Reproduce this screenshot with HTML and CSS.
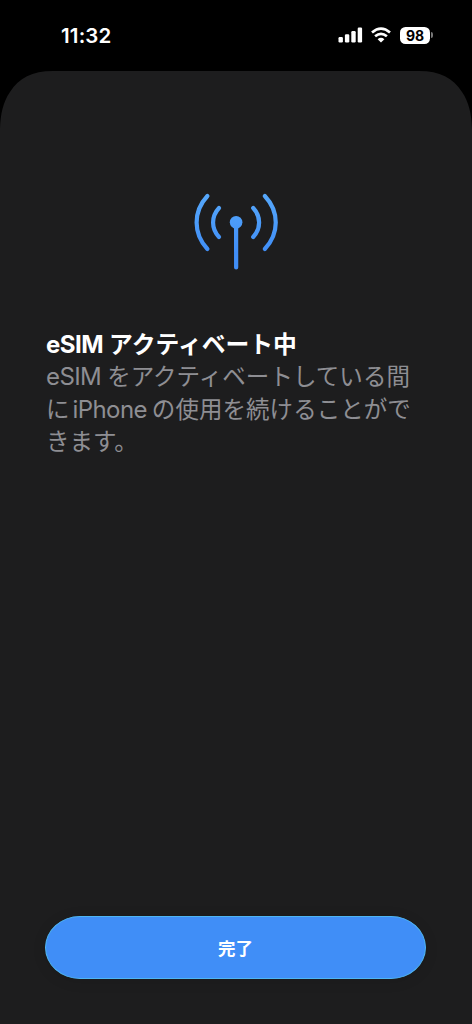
FILE: index.html
```html
<!DOCTYPE html>
<html lang="ja">
<head>
<meta charset="utf-8">
<title>eSIMアクティベート中</title>
<link rel="stylesheet" href="styles.css">
</head>
<body>
<header class="status">
  <time class="clock">11:32</time>
  <div class="indicators">
    <svg class="signal" width="25" height="16" viewBox="0 0 25 16" fill="#fff">
      <rect x="0.5" y="10" width="4.4" height="5.4" rx="1.2"/>
      <rect x="6.9" y="7.3" width="4.4" height="8.1" rx="1.2"/>
      <rect x="13.3" y="4" width="4.4" height="11.4" rx="1.2"/>
      <rect x="19.7" y="0.6" width="4.4" height="14.8" rx="1.2"/>
    </svg>
    <svg class="wifi" width="20" height="16" viewBox="0 0 20 16" fill="none" stroke="#fff" stroke-width="2.7">
      <path d="M1 5.500Q10-2.200 19 5.500"/>
      <path d="M4.100 9.300Q10 4.300 15.900 9.300"/>
      <path d="M10 15.500L6.600 12.200Q10 9.300 13.400 12.200Z" fill="#fff" stroke="none"/>
    </svg>
    <div class="battery"><span class="level">98</span><span class="cap"></span></div>
  </div>
</header>
<main class="sheet">
  <svg class="antenna" width="88" height="80" viewBox="192 192 88 80" fill="none" stroke="url(#blue)" stroke-width="4.2" stroke-linecap="round">
    <defs><linearGradient id="blue" gradientUnits="userSpaceOnUse" x1="0" y1="194" x2="0" y2="252"><stop offset="0" stop-color="#56a8fb"/><stop offset="1" stop-color="#408ef7"/></linearGradient></defs>
    <path d="M207.400 196C193 211.500 193 233.500 207.400 249"/>
    <path d="M219 208C211.100 216.500 211.100 228.500 219 237"/>
    <path d="M253.200 208C261.100 216.500 261.100 228.500 253.200 237"/>
    <path d="M264.800 196C279.400 211.500 279.400 233.500 264.800 249"/>
    <path d="M236.100 222L236.150 267.500"/>
    <circle cx="236.100" cy="222.300" r="6.300" fill="url(#blue)" stroke="none"/>
  </svg>
  <section class="message">
    <h1 class="title"><span class="latin">eSIM</span>アクティベート中</h1>
    <p class="detail"><span class="latin">eSIM</span>をアクティベートしている間<br>に<span class="latin phone">iPhone</span>の使用を続けることがで<br>きます。</p>
  </section>
  <button class="done" type="button">完了</button>
</main>
</body>
</html>
```
FILE: styles.css
```css
* { box-sizing: border-box; }
body {
  margin: 0;
  height: 1024px;
  display: flex;
  flex-direction: column;
  overflow: hidden;
  background: #000;
  color: #fff;
  font-family: Inter, "Noto Sans CJK JP", sans-serif;
}
.status {
  height: 71px;
  flex: none;
  display: flex;
  justify-content: space-between;
  align-items: center;
  padding: 0 39px 1px 61px;
}
.clock { font-size: 20.5px; font-weight: 600; letter-spacing: 0.15px; }
.indicators { display: flex; align-items: center; }
.wifi { margin: 0 9px 0 8px; }
.battery { display: flex; align-items: center; gap: 1px; }
.level {
  width: 30px;
  height: 17px;
  border-radius: 5.5px;
  background: #fff;
  color: #000;
  font-size: 14px;
  font-weight: 700;
  line-height: 17px;
  text-align: center;
}
.cap { width: 2px; height: 6px; border-radius: 0 2px 2px 0; background: #777; }
.sheet {
  flex: 1;
  display: flex;
  flex-direction: column;
  align-items: center;
  padding: 121px 46px 45px 45px;
  background: #1d1d1e;
  clip-path: path("M0 953V58C.5 43 3 31 10 21C19 7 32 0 53 0H419C440 0 453 7 462 21C469 31 471.500 43 472 58V953Z");
}
.antenna { display: block; flex: none; margin-left: 1px; }
.message { align-self: stretch; margin: 57px 0 0 1px; white-space: nowrap; }
.title, .detail { margin: 0; font-size: 23.5px; line-height: 32.5px; }
.title { font-weight: 700; font-size: 23.8px; line-height: 32px; }
.detail { font-weight: 400; color: #8e8e93; letter-spacing: 0.05px; }
.latin { font-size: 24px; margin-right: 6px; letter-spacing: -0.6px; }
.title .latin { letter-spacing: -0.5px; }
.phone { margin: 0 5px 0 3px; }
.done {
  margin-top: auto;
  width: 381px;
  height: 63px;
  flex: none;
  padding: 0;
  border: 1px solid #4fb5f2;
  border-radius: 35px / 31.5px;
  background: #408ef7;
  color: #fff;
  font: 700 17.5px/59px "Noto Sans CJK JP", sans-serif;
  box-shadow: 0 2px 14px rgba(0, 0, 0, 0.1);
}
```
